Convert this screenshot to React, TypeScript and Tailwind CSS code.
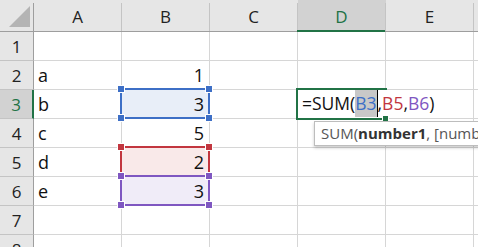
import React from "react";

type Ref = { row: number; col: number; line: string; fill: string };

const COLS = ["A", "B", "C", "D", "E"];
const ROWS = [1, 2, 3, 4, 5, 6, 7, 8];

const data: Record<string, string> = {
    A2: "a",
    A3: "b",
    A4: "c",
    A5: "d",
    A6: "e",
    B2: "1",
    B3: "3",
    B4: "5",
    B5: "2",
    B6: "3",
};

const refs: Ref[] = [
    { row: 3, col: 1, line: "bg-[#3d6fc6]", fill: "bg-[#e8eef8]" },
    { row: 5, col: 1, line: "bg-[#c2363f]", fill: "bg-[#f9e9e9]" },
    { row: 6, col: 1, line: "bg-[#7f57c1]", fill: "bg-[#f0ecf8]" },
];

const borderColor: Record<string, string> = {
    "bg-[#3d6fc6]": "border-[#3d6fc6]",
    "bg-[#c2363f]": "border-[#c2363f]",
    "bg-[#7f57c1]": "border-[#7f57c1]",
};

const activeRow = 3;
const activeCol = 3;

function Corner() {
    return (
        <div className="flex h-full w-[34px] shrink-0 bg-[#e6e6e6]">
            <div className="flex flex-1 items-end justify-end pb-[4px] pr-[2px]">
                <svg width="22" height="21" viewBox="0 0 22 21">
                    <polygon points="0,21 21,0 21,21" fill="#b4b4b4" />
                </svg>
            </div>
            <div className="mt-[3px] w-px bg-[#9e9e9e]" />
        </div>
    );
}

function ColHeader({ label, index }: { label: string; index: number }) {
    const active = index === activeCol;
    return (
        <div
            className={
                active
                    ? "flex h-full w-[88px] shrink-0 bg-[#d2d2d2]"
                    : "flex h-full w-[88px] shrink-0"
            }
        >
            <div className="flex flex-1 items-center justify-center pt-[1px]">
                <span
                    className={
                        active
                            ? "text-[17px] text-[#217346]"
                            : "text-[17px] text-[#222]"
                    }
                >
                    {label}
                </span>
            </div>
            <div className="mt-[3px] w-px bg-[#c4c4c4]" />
        </div>
    );
}

function RangeBox({ r }: { r: Ref }) {
    const left = 33 + 88 * r.col - 1;
    const top = 31 + 29 * (r.row - 1) - 1;
    return (
        <div
            className={`pointer-events-none absolute h-[31px] w-[90px] border-2 ${borderColor[r.line]}`}
            style={{ left, top }}
        >
            <div className={`absolute -left-[5px] -top-[5px] h-[8px] w-[8px] border border-white ${r.line}`} />
            <div className={`absolute -right-[5px] -top-[5px] h-[8px] w-[8px] border border-white ${r.line}`} />
            <div className={`absolute -bottom-[5px] -left-[5px] h-[8px] w-[8px] border border-white ${r.line}`} />
            <div className={`absolute -bottom-[5px] -right-[5px] h-[8px] w-[8px] border border-white ${r.line}`} />
        </div>
    );
}

function Row({ n }: { n: number }) {
    const active = n === activeRow;
    return (
        <div className="flex h-[29px] shrink-0">
            <div
                className={
                    active
                        ? "flex w-[34px] shrink-0 items-center justify-center border-b border-r-2 border-b-[#c4c4c4] border-r-[#217346] bg-[#d2d2d2] text-[17px] text-[#217346]"
                        : "flex w-[34px] shrink-0 items-center justify-center border-b border-r border-b-[#c4c4c4] border-r-[#9e9e9e] bg-[#e6e6e6] text-[17px] text-[#222]"
                }
            >
                {n}
            </div>
            {COLS.map((c, i) => {
                const value = data[c + n];
                const isNumber = value !== undefined && !isNaN(Number(value));
                const ref = refs.find((r) => r.row === n && r.col === i);
                return (
                    <div
                        key={c}
                        className={`flex w-[88px] shrink-0 items-center border-b border-r border-[#d6d6d6] px-[4px] text-[18px] text-[#111] ${
                            isNumber ? "justify-end pr-[5px]" : "justify-start"
                        } ${ref ? ref.fill : ""}`}
                    >
                        {value}
                    </div>
                );
            })}
            <div className="flex-1 border-b border-[#d6d6d6]" />
        </div>
    );
}

export default function App() {
    return (
        <div className="relative h-[247px] w-[478px] overflow-hidden bg-white font-['Open_Sans',sans-serif] leading-none">
            <div className="flex h-[32px] border-b border-[#9e9e9e] bg-[#e6e6e6]">
                <Corner />
                {COLS.map((c, i) => (
                    <ColHeader key={c} label={c} index={i} />
                ))}
                <div className="flex-1" />
            </div>
            {ROWS.map((n) => (
                <Row key={n} n={n} />
            ))}

            {/* green underline under active column header */}
            <div className="absolute left-[297px] top-[30px] h-[2px] w-[88px] bg-[#217346]" />

            {refs.map((r) => (
                <RangeBox key={r.row} r={r} />
            ))}

            {/* active cell D3 in edit mode */}
            <div className="absolute left-[296px] top-[88px] h-[32px] w-[91px] border-2 border-[#217346]" />
            <div className="absolute left-[298px] top-[90px] flex h-[27px] items-center whitespace-nowrap bg-white pl-[4px] pr-[4px] text-[17.5px] text-[#111]">
                <span>=SUM(</span>
                <span className="flex h-[27px] items-center bg-[#c8c8c8] text-[#3d6fc6]">B3</span>
                <span className="h-[27px] w-px bg-black" />
                <span>,</span>
                <span className="text-[#c2363f]">B5</span>
                <span>,</span>
                <span className="text-[#7f57c1]">B6</span>
                <span>)</span>
            </div>
            <div className="absolute left-[382px] top-[115px] h-[7px] w-[7px] border border-white bg-[#217346]" />

            {/* function tooltip */}
            <div className="absolute left-[314px] top-[121px] flex h-[25px] w-[200px] items-center whitespace-nowrap border border-[#bdbdbd] bg-white pl-[6px] text-[15px] text-[#555] shadow-[0_2px_3px_rgba(0,0,0,0.2)]">
                <span>SUM(</span>
                <span className="font-bold text-[#333]">number1</span>
                <span>, [number2], ...)</span>
            </div>
        </div>
    );
}
